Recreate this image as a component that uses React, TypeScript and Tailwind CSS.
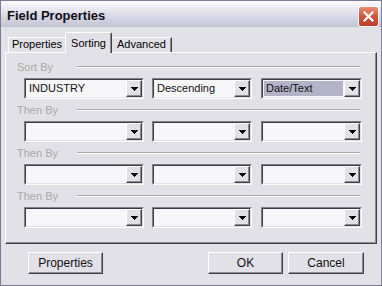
import React from "react";

const font = { fontFamily: '"Liberation Sans", Arial, sans-serif' };

function Arrow() {
    return (
        <svg width="7" height="4" viewBox="0 0 7 4" shapeRendering="crispEdges">
            <path d="M0 0h7v1h-1v1h-1v1h-1v1h-1v-1h-1v-1h-1v-1h-1z" fill="#000" />
        </svg>
    );
}

function Combo({ className, value, selected }: { className: string; value?: string; selected?: boolean }) {
    return (
        <div className={`h-[21px] border border-t-[#7f7f86] border-l-[#7f7f86] border-b-white border-r-white ${className}`}>
            <div className="flex h-full border border-t-[#3c3c44] border-l-[#3c3c44] border-b-[#e2e1e8] border-r-[#e2e1e8] bg-[#f7f7f9]">
                <div className="flex-1 p-px">
                    <div className={`flex h-full items-center pl-[2px] text-[11px] leading-none text-[#111] ${selected ? "bg-[#b3b2c9]" : ""}`}>
                        {value}
                    </div>
                </div>
                <div className="flex h-full w-[16px] items-center justify-center border border-t-white border-l-white border-b-[#404040] border-r-[#404040] bg-[#e2e1e8] shadow-[inset_-1px_-1px_0_#8c8b95]">
                    <Arrow />
                </div>
            </div>
        </div>
    );
}

function Section({ label, values = [], selectedLast }: { label: string; values?: string[]; selectedLast?: boolean }) {
    return (
        <div className="flex flex-col">
            <div className="flex h-[14px] items-center">
                <span className="w-[60px] text-[11px] leading-none text-[#a9a8a2]">{label}</span>
                <div className="mr-[2px] flex-1 border-t border-b border-t-[#a9a8a6] border-b-white" />
            </div>
            <div className="ml-[7px] mt-[4px] flex">
                <Combo className="w-[120px]" value={values[0]} />
                <Combo className="ml-[8px] w-[100px]" value={values[1]} />
                <Combo className="ml-[9px] w-[101px]" value={values[2]} selected={selectedLast} />
            </div>
        </div>
    );
}

function Button({ label, className = "" }: { label: string; className?: string }) {
    return (
        <div className={`flex h-[22px] items-center justify-center border border-t-white border-l-white border-b-[#404040] border-r-[#404040] bg-[#e2e1e8] text-[12px] text-[#111] shadow-[inset_-1px_-1px_0_#8c8b95] ${className}`}>
            {label}
        </div>
    );
}

export default function App() {
    return (
        <div className="flex h-[286px] w-[382px] flex-col border border-[#7c7b94] bg-[#e2e1e8] text-black" style={font}>
            {/* Title bar */}
            <div className="flex h-[26px] shrink-0 items-center justify-between bg-gradient-to-b from-[#fbfbfd] via-[#dedde8] to-[#c4c3d3] pl-[6px] pr-[2px]">
                <span className="pt-[3px] text-[13px] font-bold text-[#0f0f1a]">Field Properties</span>
                <div className="mt-[4px] flex h-[21px] w-[21px] items-center justify-center rounded-[3px] border border-white bg-gradient-to-b from-[#e98a74] via-[#d3563c] to-[#b9402a]">
                    <svg width="11" height="11" viewBox="0 0 11 11">
                        <path d="M1.5 1.5l8 8M9.5 1.5l-8 8" stroke="#fff" strokeWidth="2.2" strokeLinecap="square" />
                    </svg>
                </div>
            </div>

            <div className="flex flex-1 flex-col pl-[4px] pr-[3px]">
                {/* Tabs */}
                <div className="mt-[5px] flex h-[20px] items-end pl-[3px]">
                    <div className="flex h-[15px] w-[57px] items-start justify-center border-t border-l border-t-white border-l-white text-[11px] leading-[13px]">
                        Properties
                    </div>
                    <div className="relative z-10 -mb-px flex h-[21px] w-[47px] items-start justify-center rounded-t-[2px] border-t border-l border-r border-t-white border-l-white border-r-[#404040] bg-[#e2e1e8] pt-[4px] text-[11px] leading-[13px] shadow-[inset_-1px_0_0_#8c8b95]">
                        Sorting
                    </div>
                    <div className="flex h-[15px] w-[60px] items-start justify-center border-t border-r border-t-white border-r-[#404040] text-[11px] leading-[13px] shadow-[inset_-1px_0_0_#8c8b95]">
                        Advanced
                    </div>
                </div>

                {/* Panel */}
                <div className="flex h-[192px] w-[372px] flex-col gap-[4px] border border-t-white border-l-white border-b-[#404040] border-r-[#404040] pl-[11px] pr-[14px] pt-[7px] shadow-[inset_-1px_-1px_0_#8c8b95]">
                    <Section label="Sort By" values={["INDUSTRY", "Descending", "Date/Text"]} selectedLast />
                    <Section label="Then By" />
                    <Section label="Then By" />
                    <Section label="Then By" />
                </div>

                {/* Buttons */}
                <div className="mt-[8px] flex">
                    <Button label="Properties" className="ml-[23px] w-[75px]" />
                    <Button label="OK" className="ml-auto w-[75px]" />
                    <Button label="Cancel" className="ml-[5px] mr-[14px] w-[76px]" />
                </div>
            </div>
        </div>
    );
}
